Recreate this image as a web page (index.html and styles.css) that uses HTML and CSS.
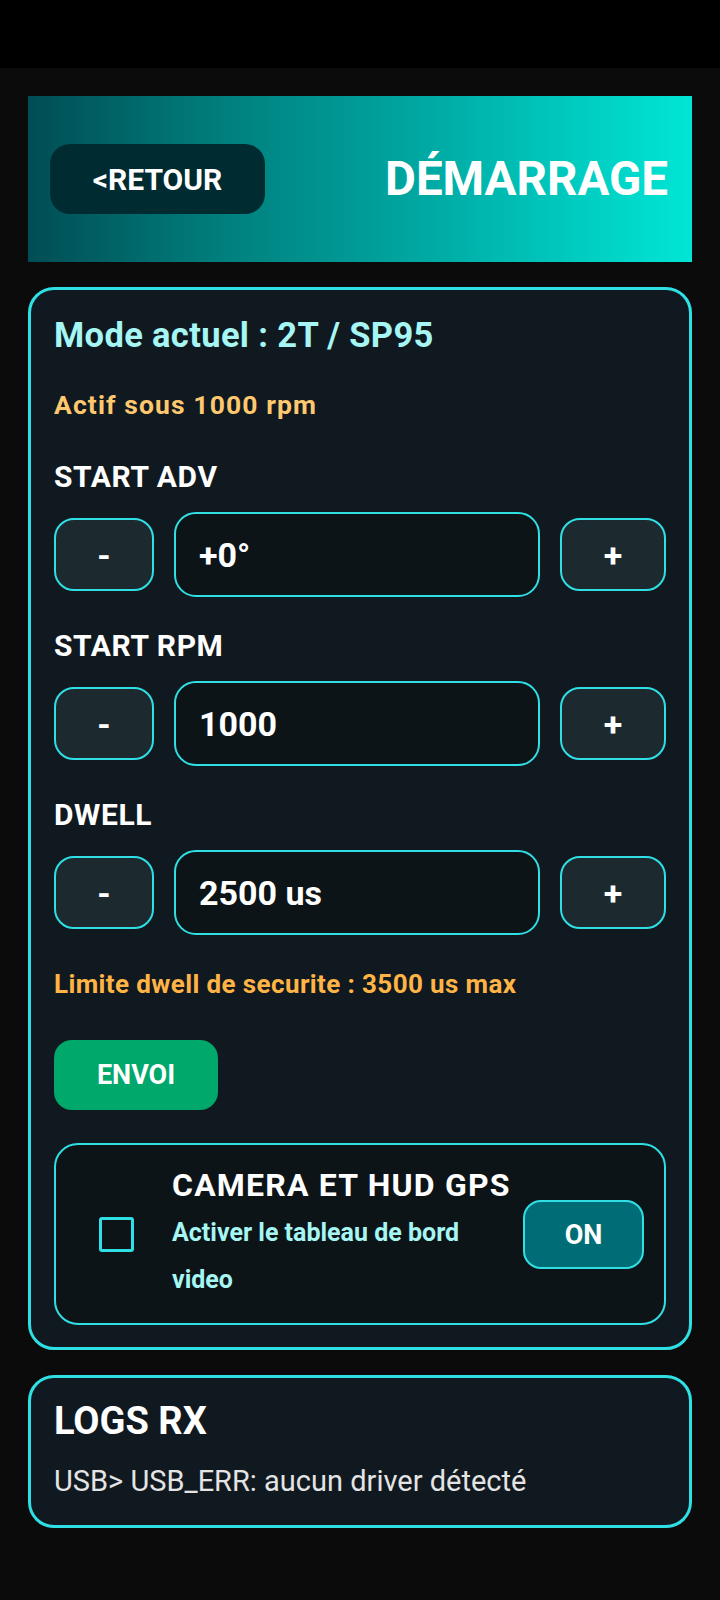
FILE: index.html
```html
<!DOCTYPE html>
<html lang="fr">
<head>
<meta charset="utf-8">
<title>Démarrage</title>
<link rel="stylesheet" href="styles.css">
</head>
<body>
<div class="statusbar"></div>
<main class="page">
  <header class="header">
    <button class="back">&lt;RETOUR</button>
    <h1 class="header-title">DÉMARRAGE</h1>
  </header>

  <section class="card">
    <h2 class="mode">Mode actuel : 2T / SP95</h2>
    <p class="active">Actif sous 1000 rpm</p>

    <div class="field-label">START ADV</div>
    <div class="stepper">
      <button class="step minus">-</button>
      <div class="value">+0°</div>
      <button class="step plus">+</button>
    </div>

    <div class="field-label">START RPM</div>
    <div class="stepper">
      <button class="step minus">-</button>
      <div class="value">1000</div>
      <button class="step plus">+</button>
    </div>

    <div class="field-label">DWELL</div>
    <div class="stepper">
      <button class="step minus">-</button>
      <div class="value">2500 us</div>
      <button class="step plus">+</button>
    </div>

    <p class="limit">Limite dwell de securite : 3500 us max</p>

    <button class="send">ENVOI</button>

    <div class="option">
      <span class="checkbox"></span>
      <div class="option-text">
        <div class="option-title">CAMERA ET HUD GPS</div>
        <div class="option-sub">Activer le tableau de bord video</div>
      </div>
      <button class="toggle">ON</button>
    </div>
  </section>

  <section class="card logs">
    <h2 class="logs-title">LOGS RX</h2>
    <p class="log-line">USB&gt; USB_ERR: aucun driver détecté</p>
  </section>
</main>
</body>
</html>
```

FILE: styles.css
```css
* {
  box-sizing: border-box;
}

html, body {
  margin: 0;
  padding: 0;
}

body {
  background: #0b0b0b;
  font-family: Roboto, "Noto Sans", "Liberation Sans", sans-serif;
  color: #ffffff;
  min-height: 1600px;
}

.statusbar {
  height: 68px;
  background: #000000;
}

.page {
  padding: 28px 28px 0 28px;
}

button {
  font-family: inherit;
  cursor: pointer;
}

/* Header */
.header {
  height: 166px;
  display: flex;
  align-items: center;
  justify-content: space-between;
  padding: 0 24px 0 22px;
  background: linear-gradient(90deg, #004d54 0%, #00807e 30%, #00a9a3 60%, #00e6d6 100%);
}

.back {
  width: 215px;
  height: 70px;
  border: none;
  border-radius: 20px;
  background: #002b31;
  color: #ffffff;
  font-size: 30px;
  font-weight: 700;
  padding: 0;
}

.header-title {
  margin: 0;
  font-size: 47.5px;
  line-height: 56px;
  font-weight: 700;
  color: #ffffff;
}

/* Cards */
.card {
  margin-top: 25px;
  border: 3px solid #2fdfe4;
  border-radius: 26px;
  background: #111920;
  padding: 24px 23px 22px 23px;
}

.mode {
  margin: 0;
  font-size: 34.5px;
  line-height: 42px;
  font-weight: 700;
  letter-spacing: 0.35px;
  color: #a6f6f4;
}

.active {
  margin: 32px 0 0 0;
  font-size: 26.5px;
  line-height: 34px;
  font-weight: 700;
  letter-spacing: 1.1px;
  color: #ffc86f;
}

.field-label {
  margin-top: 37px;
  font-size: 30px;
  line-height: 36px;
  font-weight: 700;
  letter-spacing: 0.6px;
  color: #ffffff;
}

.stepper + .field-label {
  margin-top: 31px;
}

.stepper {
  margin-top: 17px;
  display: flex;
  align-items: center;
  gap: 20px;
}

.step {
  height: 73px;
  border: 2px solid #2fdfe4;
  border-radius: 20px;
  background: #1c2a30;
  color: #ffffff;
  font-size: 34px;
  font-weight: 700;
  padding: 0;
}

.step.minus {
  width: 100px;
}

.step.plus {
  width: 106px;
}

.value {
  flex: 1;
  height: 85px;
  border: 2px solid #2fdfe4;
  border-radius: 22px;
  background: #0d1417;
  display: flex;
  align-items: center;
  padding-left: 23px;
  font-size: 34px;
  font-weight: 700;
  color: #ffffff;
}

.limit {
  margin: 33px 0 0 0;
  font-size: 26px;
  line-height: 32px;
  font-weight: 700;
  letter-spacing: 0.38px;
  color: #ffb445;
}

.send {
  display: block;
  margin-top: 40px;
  width: 164px;
  height: 70px;
  border: none;
  border-radius: 18px;
  background: #00a86b;
  color: #ffffff;
  font-size: 27px;
  font-weight: 700;
  padding: 0;
}

.option {
  margin-top: 33px;
  border: 2px solid #2fdfe4;
  border-radius: 24px;
  background: #0d1417;
  display: flex;
  align-items: center;
  padding: 21px 20px 20px 43px;
}

.checkbox {
  flex: none;
  width: 35px;
  height: 35px;
  border: 3px solid #2fdfe4;
  border-radius: 3px;
  margin-right: 38px;
}

.option-text {
  flex: 1;
  min-width: 0;
}

.option-title {
  font-size: 32px;
  line-height: 38px;
  font-weight: 700;
  letter-spacing: 1.2px;
  color: #ffffff;
  white-space: nowrap;
}

.option-sub {
  margin-top: 5px;
  max-width: 310px;
  font-size: 25px;
  line-height: 47px;
  font-weight: 700;
  color: #a6f6f4;
}

.toggle {
  flex: none;
  width: 121px;
  height: 69px;
  border: 2px solid #2fdfe4;
  border-radius: 18px;
  background: #006d76;
  color: #ffffff;
  font-size: 27px;
  font-weight: 700;
  padding: 0;
}

/* Logs */
.logs {
  margin-top: 25px;
  padding: 21px 23px 27px 23px;
}

.logs-title {
  margin: 0;
  font-size: 38px;
  line-height: 44px;
  font-weight: 700;
  color: #ffffff;
}

.log-line {
  margin: 21px 0 0 0;
  font-size: 29px;
  line-height: 34px;
  font-weight: 400;
  color: #e4e4e4;
}
```
